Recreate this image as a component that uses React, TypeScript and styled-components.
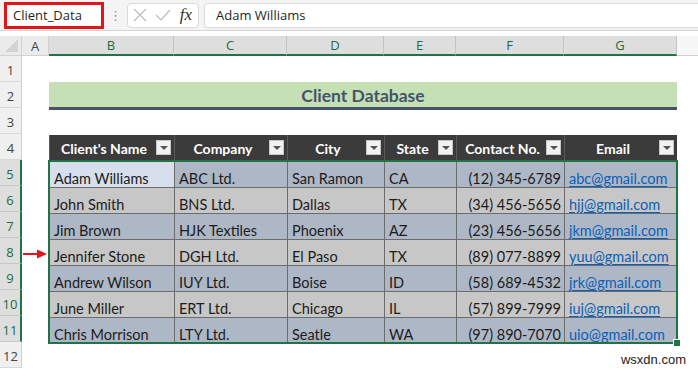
import React from 'react';
import styled, { createGlobalStyle } from 'styled-components';

const GlobalStyle = createGlobalStyle`
  html, body {
    margin: 0;
    padding: 0;
    background: #ffffff;
  }
  body {
    width: 698px;
    height: 370px;
    overflow: hidden;
    font-family: 'Lato', 'Liberation Sans', sans-serif;
  }
`;

const tableCols = '125px 113px 97px 72px 108px 113px';

const Page = styled.div`
  position: relative;
  width: 698px;
  height: 370px;
  overflow: hidden;
  background: #ffffff;
`;

const FormulaBar = styled.div`
  display: flex;
  align-items: center;
  height: 31px;
  padding: 0 0 0 4px;
  box-sizing: border-box;
  background: #f4f4f4;
  border-bottom: 1px solid #d4d4d4;
`;

const NameBox = styled.div`
  width: 100px;
  height: 27px;
  box-sizing: border-box;
  border: 3px solid #e3151a;
  background: #ffffff;
  display: flex;
  align-items: center;
  padding-left: 6px;
  font-family: 'Open Sans', 'Noto Sans', sans-serif;
  font-size: 13px;
  color: #1f1f1f;
`;

const Dots = styled.div`
  width: 23px;
  text-align: center;
  color: #8a8a8a;
  font-size: 13px;
  font-family: 'DejaVu Sans', sans-serif;
`;

const FxBox = styled.div`
  width: 72px;
  height: 25px;
  box-sizing: border-box;
  border: 1px solid #dadada;
  border-radius: 4px;
  background: #ffffff;
  display: flex;
  align-items: center;
  justify-content: space-between;
  padding: 0 6px 0 5px;
`;

const Fx = styled.span`
  font-family: 'Liberation Serif', serif;
  font-style: italic;
  font-size: 17px;
  color: #303030;
`;

const FormulaInput = styled.div`
  flex: 1;
  margin-left: 5px;
  height: 25px;
  box-sizing: border-box;
  border: 1px solid #dadada;
  border-right: none;
  border-radius: 4px 0 0 4px;
  background: #ffffff;
  display: flex;
  align-items: center;
  padding-left: 11px;
  font-family: 'Open Sans', 'Noto Sans', sans-serif;
  font-size: 13px;
  color: #1f1f1f;
`;

const Gap = styled.div`
  height: 5px;
  background: #ffffff;
`;

const ColHeadRow = styled.div`
  display: flex;
  height: 20px;
  background: #f0f0f0;
`;

const Corner = styled.div`
  position: relative;
  width: 22px;
  box-sizing: border-box;
  background: #ebebeb;
  border-right: 1px solid #d0d0d0;
  border-bottom: 1px solid #d0d0d0;
  &::after {
    content: '';
    position: absolute;
    right: 3px;
    bottom: 3px;
    border-left: 13px solid transparent;
    border-bottom: 13px solid #d3d3d3;
  }
`;

const ColHead = styled.div<{ $w: number; $sel?: boolean }>`
  width: ${p => p.$w}px;
  box-sizing: border-box;
  display: flex;
  align-items: center;
  justify-content: center;
  font-family: 'Open Sans', 'Noto Sans', sans-serif;
  font-size: 13px;
  background: ${p => (p.$sel ? '#dedede' : '#ebebeb')};
  color: ${p => (p.$sel ? '#1e6b41' : '#444444')};
  border-right: 1px solid ${p => (p.$sel ? '#c2c2c2' : '#d0d0d0')};
  border-bottom: ${p => (p.$sel ? '2px solid #217346' : '1px solid #d0d0d0')};
`;

const ColRest = styled.div`
  flex: 1;
  background: #f7f7f7;
  border-bottom: 1px solid #d0d0d0;
`;

const Body = styled.div`
  position: relative;
  display: flex;
`;

const RowHeads = styled.div`
  display: flex;
  flex-direction: column;
  width: 22px;
`;

const RowHead = styled.div<{ $sel?: boolean }>`
  height: 26px;
  box-sizing: border-box;
  display: flex;
  align-items: center;
  justify-content: center;
  padding-top: 2px;
  font-family: 'Open Sans', 'Noto Sans', sans-serif;
  font-size: 13px;
  background: ${p => (p.$sel ? '#dedede' : '#f0f0f0')};
  color: ${p => (p.$sel ? '#1e6b41' : '#444444')};
  border-bottom: 1px solid ${p => (p.$sel ? '#c8c8c8' : '#d8d8d8')};
  border-right: ${p => (p.$sel ? '2px solid #217346' : '1px solid #d0d0d0')};
`;

const Canvas = styled.div`
  flex: 1;
  padding-left: 27px;
  display: flex;
  flex-direction: column;
`;

const Spacer = styled.div<{ $h: number }>`
  height: ${p => p.$h}px;
`;

const TitleBand = styled.div`
  width: 628px;
  height: 28px;
  box-sizing: border-box;
  background: #c5e0b4;
  border-bottom: 3px solid #44546a;
  display: flex;
  align-items: center;
  justify-content: center;
  padding-top: 1px;
  font-family: 'Lato', 'Liberation Sans', sans-serif;
  font-weight: 700;
  font-size: 17.5px;
  color: #44546a;
`;

const HeadRow = styled.div`
  display: grid;
  grid-template-columns: ${tableCols};
  height: 26px;
  width: 628px;
`;

const HeadCell = styled.div`
  position: relative;
  box-sizing: border-box;
  background: #3b3b3b;
  border-left: 1px solid #5a5a5a;
  display: flex;
  align-items: center;
  justify-content: center;
  padding-right: 16px;
  font-family: 'Lato', 'Liberation Sans', sans-serif;
  font-weight: 700;
  font-size: 14px;
  color: #ffffff;
`;

const FilterBtn = styled.span`
  position: absolute;
  right: 3px;
  top: 5px;
  width: 15px;
  height: 15px;
  box-sizing: border-box;
  background: #f2f2f2;
  border: 1px solid #c6c6c6;
  &::after {
    content: '';
    position: absolute;
    left: 3px;
    top: 5px;
    border-left: 4px solid transparent;
    border-right: 4px solid transparent;
    border-top: 4px solid #555555;
  }
`;

const DataBody = styled.div`
  position: relative;
  display: grid;
  grid-template-columns: ${tableCols};
  grid-auto-rows: 26px;
  width: 628px;
`;

const Cell = styled.div<{ $alt: boolean; $right?: boolean; $active?: boolean }>`
  box-sizing: border-box;
  background: ${p => (p.$active ? '#d7deec' : p.$alt ? '#c7c7c7' : '#aeb7c6')};
  border-left: 1px solid #6c6c6c;
  border-top: 1px solid #6c6c6c;
  display: flex;
  align-items: center;
  justify-content: ${p => (p.$right ? 'flex-end' : 'flex-start')};
  padding: 7px 3px 0 4px;
  font-family: 'Lato', 'Liberation Sans', sans-serif;
  font-size: 14.5px;
  color: #1c1c1c;
  white-space: nowrap;
  overflow: hidden;
`;

const Mail = styled.span`
  color: #0b5fb8;
  text-decoration: underline;
  text-underline-offset: 2px;
`;

const Selection = styled.div`
  position: absolute;
  left: -1px;
  top: -1px;
  right: -1px;
  bottom: -1px;
  border: 2px solid #217346;
  pointer-events: none;
  &::after {
    content: '';
    position: absolute;
    right: -5px;
    bottom: -5px;
    width: 6px;
    height: 6px;
    background: #217346;
    border: 1px solid #ffffff;
  }
`;

const Arrow = styled.svg`
  position: absolute;
  left: 23px;
  top: 193px;
`;

const Watermark = styled.div`
  position: absolute;
  right: 12px;
  bottom: 3px;
  font-family: 'Liberation Sans', sans-serif;
  font-size: 13px;
  color: #222222;
`;

const cols = [
  { label: 'A', w: 27 },
  { label: 'B', w: 125 },
  { label: 'C', w: 113 },
  { label: 'D', w: 97 },
  { label: 'E', w: 72 },
  { label: 'F', w: 108 },
  { label: 'G', w: 113 },
];

const headers = ["Client's Name", 'Company', 'City', 'State', 'Contact No.', 'Email'];

const clients = [
  ['Adam Williams', 'ABC Ltd.', 'San Ramon', 'CA', '(12) 345-6789', 'abc@gmail.com'],
  ['John Smith', 'BNS Ltd.', 'Dallas', 'TX', '(34) 456-5656', 'hjj@gmail.com'],
  ['Jim Brown', 'HJK Textiles', 'Phoenix', 'AZ', '(23) 456-5656', 'jkm@gmail.com'],
  ['Jennifer Stone', 'DGH Ltd.', 'El Paso', 'TX', '(89) 077-8899', 'yuu@gmail.com'],
  ['Andrew Wilson', 'IUY Ltd.', 'Boise', 'ID', '(58) 689-4532', 'jrk@gmail.com'],
  ['June Miller', 'ERT Ltd.', 'Chicago', 'IL', '(57) 899-7999', 'iuj@gmail.com'],
  ['Chris Morrison', 'LTY Ltd.', 'Seatle', 'WA', '(97) 890-7070', 'uio@gmail.com'],
];

const App: React.FC = () => {
  return (
    <Page>
      <GlobalStyle />
      <FormulaBar>
        <NameBox>Client_Data</NameBox>
        <Dots>⋮</Dots>
        <FxBox>
          <svg width="14" height="14" viewBox="0 0 14 14">
            <path d="M1 1 L13 13 M13 1 L1 13" stroke="#bdbdbd" strokeWidth="1.2" fill="none" />
          </svg>
          <svg width="16" height="14" viewBox="0 0 16 14">
            <path d="M1 7 L6 12 L15 2" stroke="#bdbdbd" strokeWidth="1.2" fill="none" />
          </svg>
          <Fx>fx</Fx>
        </FxBox>
        <FormulaInput>Adam Williams</FormulaInput>
      </FormulaBar>
      <Gap />
      <ColHeadRow>
        <Corner />
        {cols.map(c => (
          <ColHead key={c.label} $w={c.w} $sel={c.label !== 'A'}>
            {c.label}
          </ColHead>
        ))}
        <ColRest />
      </ColHeadRow>
      <Body>
        <RowHeads>
          {Array.from({ length: 12 }, (_, i) => (
            <RowHead key={i} $sel={i >= 4 && i <= 10}>
              {i + 1}
            </RowHead>
          ))}
        </RowHeads>
        <Canvas>
          <Spacer $h={26} />
          <TitleBand>Client Database</TitleBand>
          <Spacer $h={25} />
          <HeadRow>
            {headers.map(h => (
              <HeadCell key={h}>
                {h}
                <FilterBtn />
              </HeadCell>
            ))}
          </HeadRow>
          <DataBody>
            {clients.map((row, r) =>
              row.map((val, c) => (
                <Cell key={`${r}-${c}`} $alt={r % 2 === 1} $right={c === 4} $active={r === 0 && c === 0}>
                  {c === 5 ? <Mail>{val}</Mail> : val}
                </Cell>
              ))
            )}
            <Selection />
          </DataBody>
        </Canvas>
        <Arrow width="26" height="10" viewBox="0 0 26 10">
          <path d="M0 5 H16" stroke="#e3151a" strokeWidth="2" />
          <path d="M14 0.5 L24 5 L14 9.5 Z" fill="#e3151a" />
        </Arrow>
      </Body>
      <Watermark>wsxdn.com</Watermark>
    </Page>
  );
};

export default App;
